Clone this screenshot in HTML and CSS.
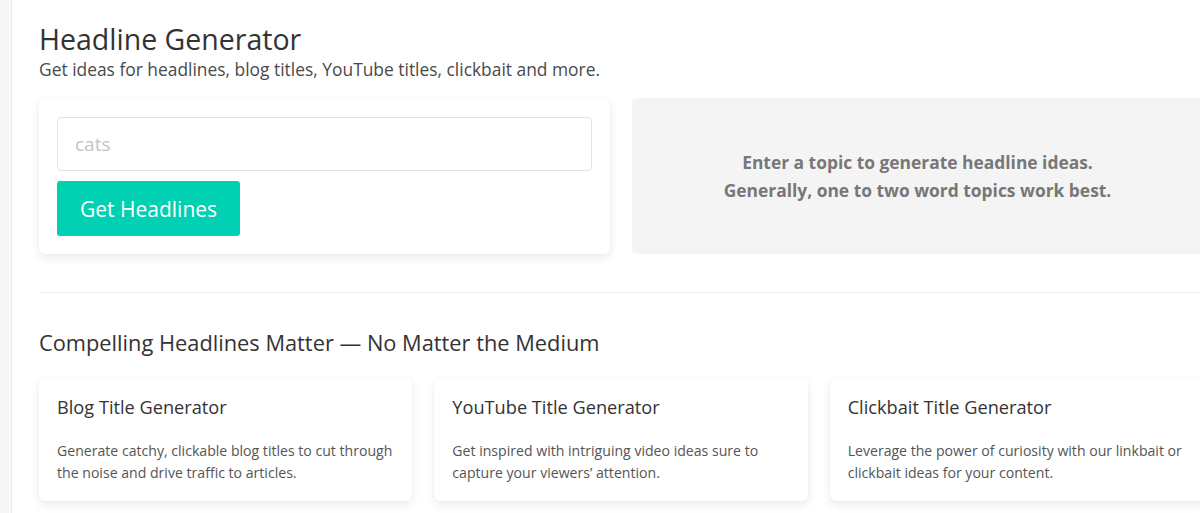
FILE: index.html
```html
<!DOCTYPE html>
<html lang="en">
<head>
    <meta charset="UTF-8">
    <meta name="viewport" content="width=device-width, initial-scale=1.0">
    <title>Headline Generator</title>
    <link rel="stylesheet" href="styles.css">
</head>
<body>
    <div class="page">
        <aside class="sidebar"></aside>
        <main class="main">
            <header class="intro">
                <h1 class="title">Headline Generator</h1>
                <p class="subtitle">Get ideas for headlines, blog titles, YouTube titles, clickbait and more.</p>
            </header>
            <div class="tool">
                <form class="tool-form" onsubmit="return false;">
                    <input type="text" class="input" placeholder="cats">
                    <button type="submit" class="button">Get Headlines</button>
                </form>
                <div class="results">
                    <p>Enter a topic to generate headline ideas.<br>Generally, one to two word topics work best.</p>
                </div>
            </div>
            <hr class="divider">
            <section class="more">
                <h2 class="section-title">Compelling Headlines Matter — No Matter the Medium</h2>
                <div class="cards">
                    <div class="card">
                        <h3>Blog Title Generator</h3>
                        <p>Generate catchy, clickable blog titles to cut through the noise and drive traffic to articles.</p>
                    </div>
                    <div class="card">
                        <h3>YouTube Title Generator</h3>
                        <p>Get inspired with intriguing video ideas sure to capture your viewers’ attention.</p>
                    </div>
                    <div class="card">
                        <h3>Clickbait Title Generator</h3>
                        <p>Leverage the power of curiosity with our linkbait or clickbait ideas for your content.</p>
                    </div>
                </div>
            </section>
        </main>
    </div>
</body>
</html>
```

FILE: styles.css
```css
body {
    font-family: "Open Sans", "Noto Sans", sans-serif;
    background: #fff;
    color: #363636;
    margin: 0;
    padding: 0;
    overflow: hidden;
}
.page {
    display: flex;
    min-height: 100vh;
    width: 1240px;
}
.sidebar {
    width: 11px;
    flex: none;
    background: #f7f7f7;
    border-right: 1px solid #ececec;
}
.main {
    width: 1164px;
    padding: 22px 0 0 27px;
}
.title {
    font-size: 28.5px;
    font-weight: 400;
    line-height: 1.2;
    margin: 0;
    color: #333;
}
.subtitle {
    font-size: 17.4px;
    line-height: 24px;
    margin: 1px 0 0;
    color: #4a4a4a;
}
.tool {
    display: grid;
    grid-template-columns: 1fr 1fr;
    gap: 22px;
    margin-top: 17px;
}
.tool-form {
    background: #fff;
    border-radius: 6px;
    box-shadow: 0 4px 10px rgba(0, 0, 0, 0.08), 0 0 2px rgba(0, 0, 0, 0.05);
    padding: 19px 18px 18px;
}
.input {
    display: block;
    box-sizing: border-box;
    width: 100%;
    height: 54px;
    padding: 0 17px;
    border: 1px solid #e2e2e2;
    border-radius: 4px;
    font-family: inherit;
    font-size: 19px;
    color: #333;
    outline: none;
}
.input::placeholder {
    color: #c4c4c4;
}
.button {
    display: block;
    margin-top: 10px;
    height: 55px;
    padding: 0 23px;
    background: #00d1b2;
    color: #fff;
    border: none;
    border-radius: 3px;
    font-family: inherit;
    font-size: 21px;
    cursor: pointer;
}
.button:hover {
    background: #00c4a7;
}
.results {
    display: flex;
    align-items: center;
    justify-content: center;
    background: #f4f4f4;
    border-radius: 4px;
    text-align: center;
}
.results p {
    margin: 0;
    font-size: 17.4px;
    font-weight: 700;
    line-height: 28px;
    color: #777;
}
.divider {
    border: none;
    border-top: 1px solid #eee;
    margin: 38px 0 0;
}
.section-title {
    font-size: 21.8px;
    font-weight: 400;
    margin: 35px 0 0;
    color: #333;
}
.cards {
    display: grid;
    grid-template-columns: repeat(3, 1fr);
    gap: 22px;
    margin-top: 21px;
}
.card {
    background: #fff;
    border-radius: 6px;
    box-shadow: 0 4px 10px rgba(0, 0, 0, 0.08), 0 0 2px rgba(0, 0, 0, 0.05);
    padding: 17px 18px 17px;
}
.card h3 {
    font-size: 18.2px;
    font-weight: 400;
    margin: 0;
    color: #333;
}
.card p {
    font-size: 14.1px;
    line-height: 22px;
    margin: 21px 0 0;
    color: #555;
}
```
